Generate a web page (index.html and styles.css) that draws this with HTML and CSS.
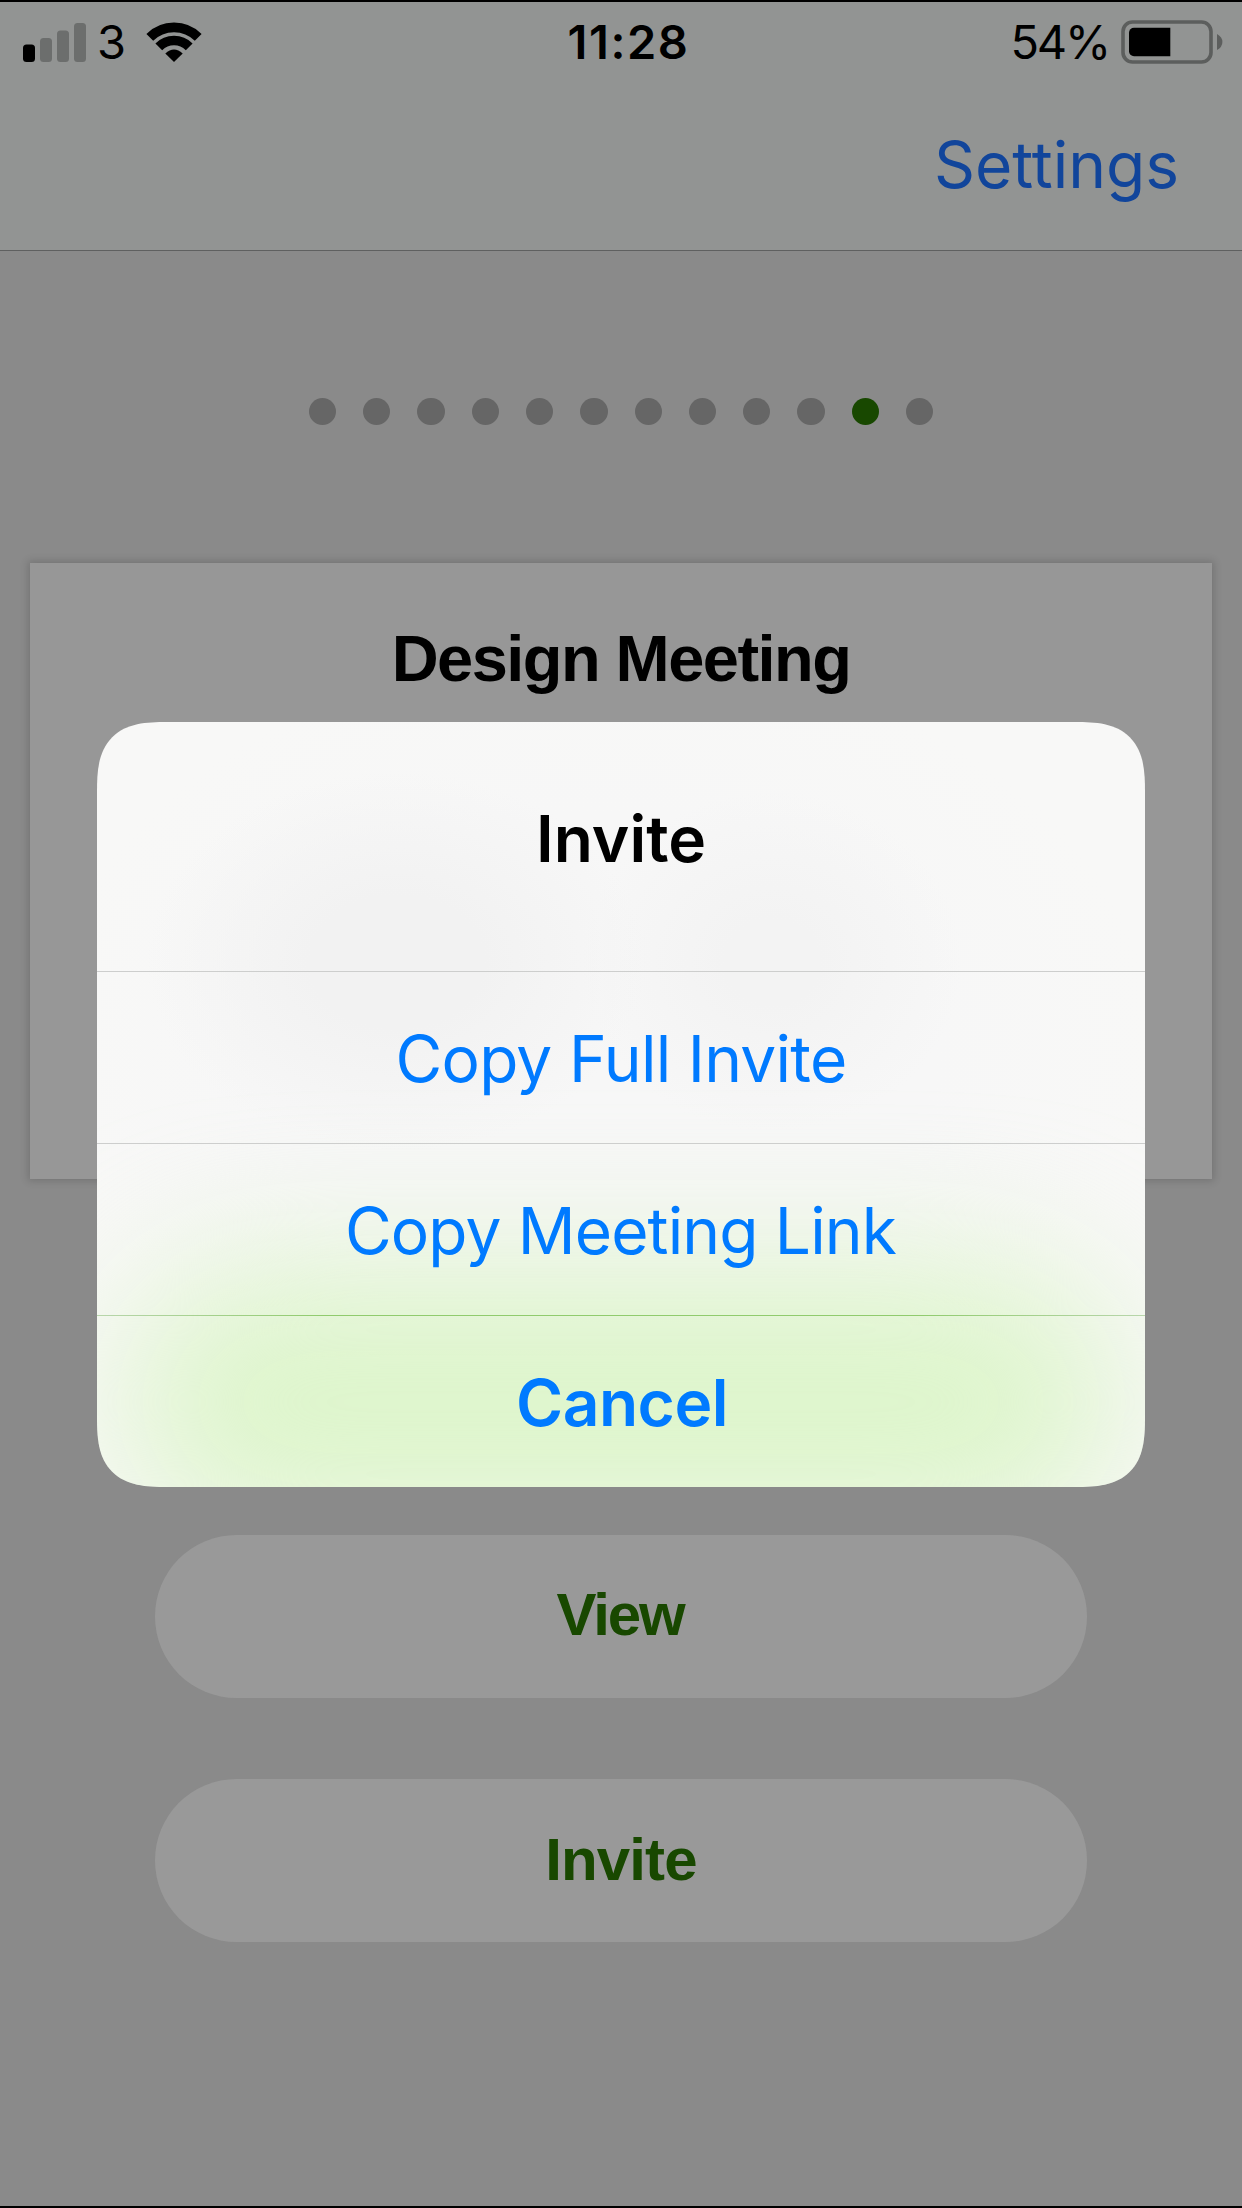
FILE: index.html
```
<!DOCTYPE html>
<html lang="en">
<head>
<meta charset="utf-8">
<title>Design Meeting</title>
<link rel="stylesheet" href="styles.css">
</head>
<body>
<div class="screen">
  <header class="top">
    <div class="status">
      <div class="status-left">
        <svg class="signal" width="64" height="40" viewBox="0 0 64 40">
          <rect x="0" y="22.5" width="12" height="17.5" rx="3.5" fill="#000"/>
          <rect x="17" y="16" width="12" height="24" rx="3.5" fill="#6c6e6d"/>
          <rect x="34" y="8.5" width="12" height="31.5" rx="3.5" fill="#6c6e6d"/>
          <rect x="51" y="1" width="12" height="39" rx="3.5" fill="#6c6e6d"/>
        </svg>
        <span class="carrier">3</span>
        <svg class="wifi" width="56" height="40" viewBox="0 0 56 40">
          <g fill="none" stroke="#000" stroke-width="9.6">
            <path d="M3.8 15.4A34.3 34.3 0 0 1 52.2 15.4"/>
            <path d="M12.8 24.8A21.5 21.5 0 0 1 43.2 24.8"/>
          </g>
          <path d="M28 40L19.3 31.4Q28 23.6 36.7 31.4Z" fill="#000"/>
        </svg>
      </div>
      <span class="clock">11:28</span>
      <div class="status-right">
        <span class="percent">54%</span>
        <svg class="battery" width="103" height="44" viewBox="0 0 103 44">
          <rect x="2" y="2" width="88" height="40" rx="9.5" fill="none" stroke="#5c5e5d" stroke-width="3.6"/>
          <path d="M49.3 7.7V36.3H13a5 5 0 0 1-5-5V12.7a5 5 0 0 1 5-5Z" fill="#000"/>
          <path d="M96 14q5.4 3 5.4 8t-5.4 8Z" fill="#5c5e5d"/>
        </svg>
      </div>
    </div>
    <nav class="nav"><a class="settings">Settings</a></nav>
  </header>

  <div class="dots">
    <i class="dot"></i><i class="dot"></i><i class="dot"></i><i class="dot"></i>
    <i class="dot"></i><i class="dot"></i><i class="dot"></i><i class="dot"></i>
    <i class="dot"></i><i class="dot"></i><i class="dot dot-active"></i><i class="dot"></i>
  </div>

  <section class="card"><h1 class="card-title">Design Meeting</h1></section>

  <div class="actions">
    <button class="pill pill-view">View</button>
    <button class="pill pill-invite">Invite</button>
  </div>

  <div class="dialog" role="dialog">
    <div class="glow"></div>
    <h2 class="dialog-title">Invite</h2>
    <button class="option option-full">Copy Full Invite</button>
    <button class="option option-link">Copy Meeting Link</button>
    <button class="option option-cancel">Cancel</button>
  </div>
</div>
</body>
</html>
```
FILE: styles.css
```
* {
  box-sizing: border-box;
}

body {
  margin: 0;
  background: #8a8a8a;
  font-family: Inter, "Liberation Sans", sans-serif;
}

button,
h1,
h2 {
  margin: 0;
  padding: 0;
  border: 0;
  background: none;
}

.screen {
  position: relative;
  display: flex;
  flex-direction: column;
  width: 1242px;
  height: 2208px;
  overflow: hidden;
  border-top: 2px solid #000;
  border-bottom: 2px solid #000;
  background: #8a8a8a;
}

/* Status bar and navigation */
.top {
  height: 249px;
  border-bottom: 1px solid #5f6060;
  background: #929493;
}

.status {
  display: grid;
  grid-template-columns: 1fr auto 1fr;
  align-items: center;
  height: 77px;
  padding: 0 18px 0 23px;
  font-size: 47px;
  line-height: 80px;
  color: #000;
}

.status-left,
.status-right {
  display: flex;
  align-items: center;
}

.status-right {
  justify-content: flex-end;
}

.carrier {
  margin-left: 10px;
}

.wifi {
  margin-left: 20px;
}

.clock {
  font-weight: 600;
  letter-spacing: 1.6px;
  transform: translateX(5px);
}

.percent {
  letter-spacing: -2.2px;
}

.battery {
  margin-left: 12px;
}

.nav {
  display: flex;
  justify-content: flex-end;
  padding: 46px 63px 0 0;
}

.settings {
  font-size: 64px;
  line-height: 80px;
  color: #11459b;
}

/* Page indicator */
.dots {
  display: flex;
  justify-content: center;
  gap: 27px;
  margin-top: 147px;
}

.dot {
  width: 27.3px;
  height: 27.4px;
  border-radius: 50%;
  background: #666;
}

.dot-active {
  background: #184800;
}

/* Meeting card */
.card {
  height: 616px;
  margin: 137.6px 30px 0;
  padding-top: 56px;
  background: #979797;
  box-shadow: 0 0 8px 2px rgba(0, 0, 0, 0.16);
  text-align: center;
}

.card-title {
  font: 700 65px/80px "Liberation Sans", Arial, sans-serif;
  letter-spacing: -1.55px;
}

/* Main buttons */
.actions {
  display: flex;
  flex-direction: column;
  align-items: center;
  gap: 81px;
  margin-top: 356px;
}

.pill {
  width: 932px;
  height: 163px;
  border-radius: 82px;
  background: #999;
  color: #184800;
  font: 700 60px/80px "Liberation Sans", Arial, sans-serif;
}

.pill-view {
  padding-bottom: 2px;
  padding-right: 2px;
  letter-spacing: -2.1px;
}

.pill-invite {
  letter-spacing: -0.9px;
}

/* Alert dialog */
.dialog {
  position: absolute;
  top: 720px;
  left: 97px;
  width: 1048px;
  height: 765px;
  overflow: hidden;
  isolation: isolate;
  border-radius: 70px;
  corner-shape: superellipse(1.5);
  background:
    radial-gradient(ellipse 250px 190px at 300px 240px, #f2f2f2 35%, rgba(243, 243, 243, 0) 100%),
    radial-gradient(ellipse 190px 170px at 675px 240px, #f3f3f3 25%, rgba(243, 243, 243, 0) 100%),
    radial-gradient(ellipse 560px 400px at 500px 330px, #f7f7f7 60%, rgba(247, 247, 247, 0) 100%),
    #f8f8f7;
}

.glow {
  position: absolute;
  z-index: -1;
  top: 545px;
  left: 24px;
  width: 1000px;
  height: 270px;
  border-radius: 135px;
  background: #ddf5cb;
  filter: blur(74px);
}

.dialog-title {
  height: 249px;
  padding-top: 77px;
  font-size: 64px;
  font-weight: 600;
  line-height: 80px;
  text-align: center;
}

.option {
  display: block;
  width: 100%;
  height: 172px;
  padding-top: 2px;
  border-top: 1px solid #cdcecd;
  color: #007aff;
  font: 400 64px/80px Inter, "Liberation Sans", sans-serif;
}

.option-full {
  letter-spacing: -0.73px;
}

.option-link {
  padding-right: 1px;
  letter-spacing: -0.85px;
}

.option-cancel {
  border-image: linear-gradient(90deg, #b8d6ab, #90cb6d 22%, #90cb6d 78%, #b8d6ab) 1;
  padding-left: 2px;
  font-weight: 600;
  letter-spacing: -0.5px;
}
```
